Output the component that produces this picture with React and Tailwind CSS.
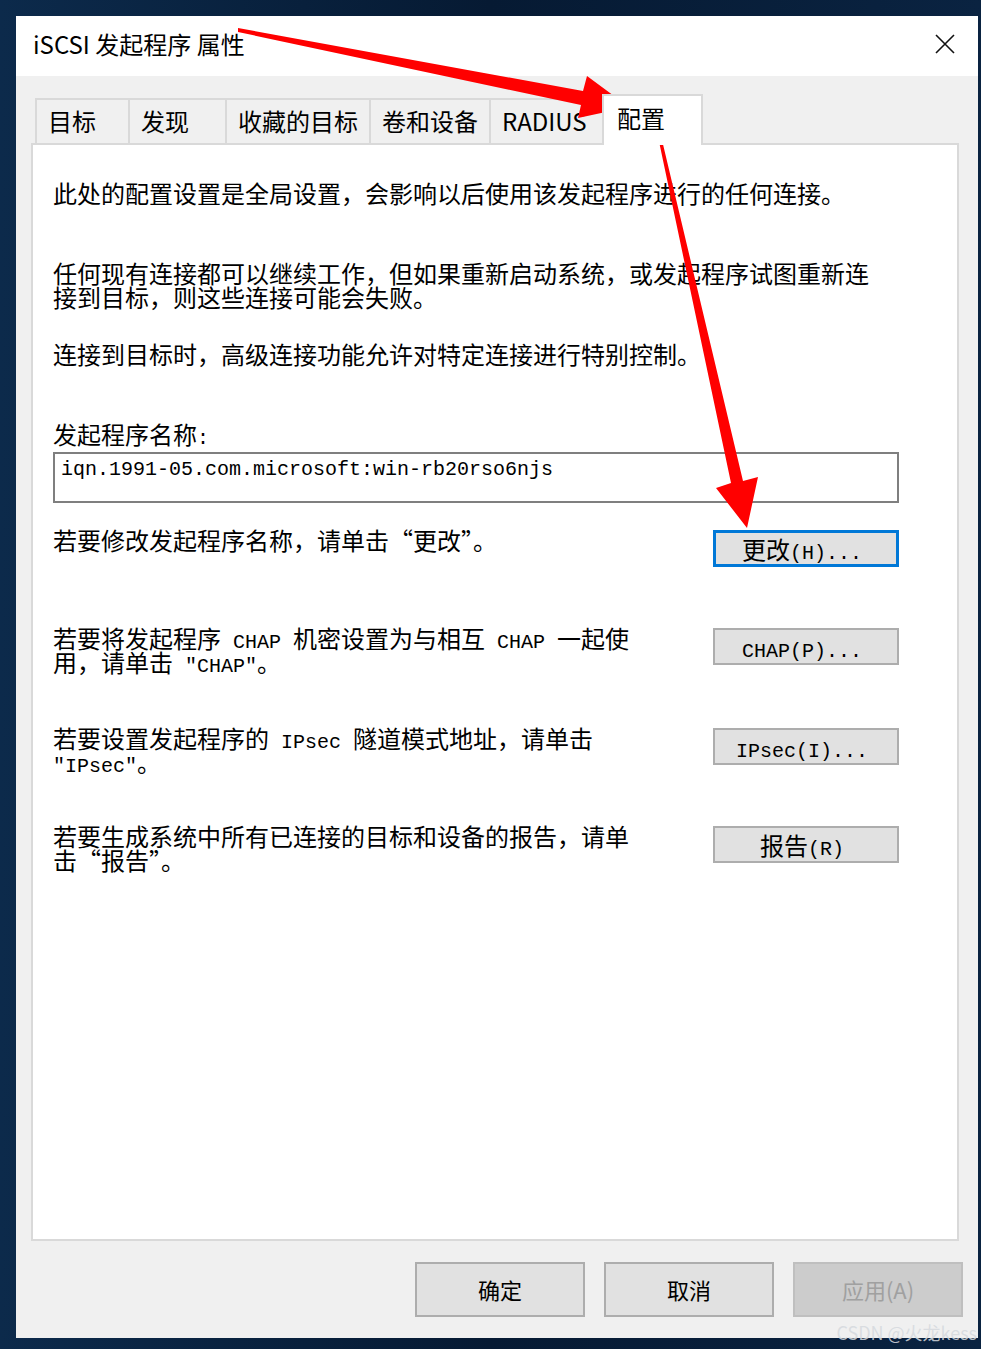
const cjk = "font-['Noto_Sans_CJK_SC',sans-serif]";

const M = ({ children }) => (
  <span className="font-['Liberation_Mono',monospace] text-[20px] leading-[0]">{children}</span>
);

const tabs = [
  { label: "目标", w: "w-[93px]" },
  { label: "发现", w: "w-[97px]" },
  { label: "收藏的目标", w: "w-[144px]" },
  { label: "卷和设备", w: "w-[120px]" },
  { label: "RADIUS", w: "w-[113px]" },
];

const SideButton = ({ focused, children }) => (
  <div
    className={
      focused
        ? "mt-[2px] w-[186px] h-[37px] shrink-0 bg-[#e1e1e1] border-[3px] border-[#0078d7] flex items-center justify-center leading-[24px]"
        : "mt-[2px] w-[186px] h-[37px] shrink-0 bg-[#e1e1e1] border-2 border-[#adadad] flex items-center justify-center leading-[24px]"
    }
  >
    <span className="-ml-[8px]">{children}</span>
  </div>
);

const Arrows = () => (
  <svg
    className="absolute inset-0 pointer-events-none"
    width="981"
    height="1349"
    viewBox="0 0 981 1349"
  >
    <polygon
      fill="#ff0000"
      points="238,28 583,91 587,76 629,107 578,118 581,105 238,32"
    />
    <polygon
      fill="#ff0000"
      points="658.5,139 661.5,138 743,481 758,477 747,528 716,488 731,483"
    />
  </svg>
);

export default function App() {
  return (
    <div
      className={`relative w-[981px] h-[1349px] overflow-hidden bg-gradient-to-r from-[#0c2a4b] via-[#061a33] to-[#0a2341] pt-[16px] pl-[16px] ${cjk} text-black`}
    >
      <div className="w-[962px] h-[1322px] flex flex-col bg-[#f0f0f0]">
        {/* title bar */}
        <div className="h-[60px] bg-white flex items-center justify-between pl-[17px] pr-[23px]">
          <span className="text-[24px] leading-[30px] -mt-[4px]">iSCSI 发起程序 属性</span>
          <svg width="20" height="20" viewBox="0 0 20 20" className="-mt-[4px]">
            <path d="M1 1 L19 19 M19 1 L1 19" stroke="#111" strokeWidth="1.6" />
          </svg>
        </div>

        {/* tabs + panel */}
        <div className="pl-[15px] pr-[19px] pt-[18px]">
          <div className="flex items-end pl-[4px]">
            {tabs.map((t) => (
              <div
                key={t.label}
                className={`${t.w} h-[45px] pt-[9px] pl-[11px] border-l-2 border-t-2 border-[#d9d9d9] bg-[#f0f0f0] text-[24px] leading-[24px] whitespace-nowrap`}
              >
                {t.label}
              </div>
            ))}
            <div className="relative z-10 w-[101px] h-[51px] -mb-[2px] pt-[10px] pl-[13px] border-x-2 border-t-2 border-[#d9d9d9] bg-white text-[24px] leading-[24px]">
              配置
            </div>
          </div>

          <div className="h-[1098px] bg-white border-2 border-[#d9d9d9] pl-[20px] pt-[36px] text-[24px] leading-[24px]">
            <div className="w-[846px]">
              <p>此处的配置设置是全局设置，会影响以后使用该发起程序进行的任何连接。</p>
              <p className="mt-[56px]">
                任何现有连接都可以继续工作，但如果重新启动系统，或发起程序试图重新连
                <br />
                接到目标，则这些连接可能会失败。
              </p>
              <p className="mt-[33px]">连接到目标时，高级连接功能允许对特定连接进行特别控制。</p>
              <p className="mt-[56px]">
                发起程序名称<M>:</M>
              </p>
              <div className="mt-[6px] h-[51px] border-2 border-[#7f7f7f] pl-[6px] pt-[4px] font-['Liberation_Mono',monospace] text-[20px] leading-[24px]">
                iqn.1991-05.com.microsoft:win-rb20rso6njs
              </div>

              <div className="mt-[25px] flex justify-between items-start">
                <p>若要修改发起程序名称，请单击“更改”。</p>
                <SideButton focused>
                  更改<M>(H)...</M>
                </SideButton>
              </div>

              <div className="mt-[59px] flex justify-between items-start">
                <p>
                  若要将发起程序<M> CHAP </M>机密设置为与相互<M> CHAP </M>一起使
                  <br />
                  用，请单击<M> "CHAP"</M>。
                </p>
                <SideButton>
                  <M>CHAP(P)...</M>
                </SideButton>
              </div>

              <div className="mt-[52px] flex justify-between items-start">
                <p>
                  若要设置发起程序的<M> IPsec </M>隧道模式地址，请单击
                  <br />
                  <M>"IPsec"</M>。
                </p>
                <SideButton>
                  <M>IPsec(I)...</M>
                </SideButton>
              </div>

              <div className="mt-[50px] flex justify-between items-start">
                <p>
                  若要生成系统中所有已连接的目标和设备的报告，请单
                  <br />
                  击“报告”。
                </p>
                <SideButton>
                  报告<M>(R)</M>
                </SideButton>
              </div>
            </div>
          </div>
        </div>

        {/* dialog buttons */}
        <div className="mt-[21px] flex justify-end gap-[19px] pr-[15px] text-[22px]">
          <div className="w-[170px] h-[55px] bg-[#e1e1e1] border-2 border-[#adadad] flex items-center justify-center">
            确定
          </div>
          <div className="w-[170px] h-[55px] bg-[#e1e1e1] border-2 border-[#adadad] flex items-center justify-center">
            取消
          </div>
          <div className="w-[170px] h-[55px] bg-[#cccccc] border-2 border-[#bfbfbf] text-[#a0a0a0] flex items-center justify-center">
            应用(A)
          </div>
        </div>
      </div>

      <Arrows />

      <div className="absolute right-[4px] bottom-[6px] text-[18px] leading-[22px] text-[#d5d9de]/85">
        CSDN @火龙kess
      </div>
    </div>
  );
}
